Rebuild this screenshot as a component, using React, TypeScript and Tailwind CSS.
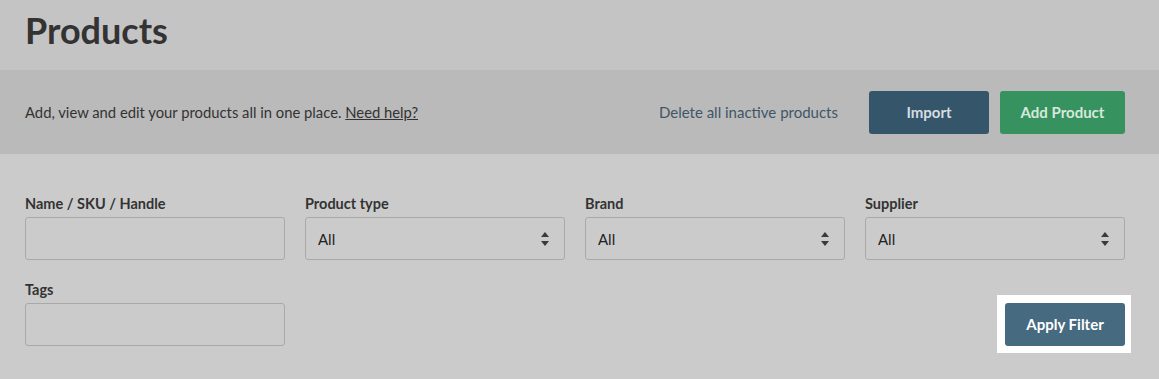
import React from "react";

const font = { fontFamily: "Lato, 'Liberation Sans', sans-serif" };

function Arrows() {
  return (
    <svg width="10" height="18" viewBox="0 0 10 18" className="shrink-0">
      <path d="M1 7 L5 2 L9 7 Z" fill="#3a3a3a" />
      <path d="M1 11 L5 16 L9 11 Z" fill="#3a3a3a" />
    </svg>
  );
}

function Field({ label, select }: { label: string; select?: boolean }) {
  return (
    <div className="flex flex-col">
      <label className="text-[14.5px] leading-[20px] font-bold text-[#333] mb-[3px]">{label}</label>
      <div className="h-[43px] rounded-[3px] border border-[#a9a9a9] bg-[#cbcbcb] flex items-center justify-between pl-[12px] pr-[14px]">
        {select && (
          <>
            <span className="text-[15px] text-[#222] mt-[1px]">All</span>
            <Arrows />
          </>
        )}
      </div>
    </div>
  );
}

export default function App() {
  return (
    <div className="w-[1159px] h-[379px] bg-[#cbcbcb] overflow-hidden" style={font}>
      {/* Title */}
      <div className="h-[70px] bg-[#c4c4c4] px-[25px] flex items-center">
        <h1 className="text-[36px] font-bold text-[#333] leading-none -mt-[10px]">Products</h1>
      </div>

      {/* Banner */}
      <div className="h-[84px] bg-[#bababa] pl-[25px] pr-[34px] flex items-center justify-between">
        <p className="text-[14.8px] text-[#333]">
          Add, view and edit your products all in one place.{" "}
          <a className="underline text-[#333]">Need help?</a>
        </p>
        <div className="flex items-center">
          <span className="text-[15px] text-[#3f5668] mr-[31px]">Delete all inactive products</span>
          <button className="w-[120px] h-[43px] rounded-[3px] bg-[#35566a] text-[#d6dde2] text-[15px] font-bold mr-[11px]">
            Import
          </button>
          <button className="w-[125px] h-[43px] rounded-[3px] bg-[#36935f] text-[#d8e8dc] text-[15px] font-bold">
            Add Product
          </button>
        </div>
      </div>

      {/* Filters */}
      <div className="pl-[25px] pt-[40px] pr-[34px]">
        <div className="grid grid-cols-4 gap-x-[20px] gap-y-[20px]">
          <Field label="Name / SKU / Handle" />
          <Field label="Product type" select />
          <Field label="Brand" select />
          <Field label="Supplier" select />
          <Field label="Tags" />
          <div />
          <div />
          <div className="flex items-end justify-end">
            <div className="bg-white pl-[8px] pt-[8px] pr-[6px] pb-[7px] -mr-[6px] -mb-[7px]">
              <button className="w-[120px] h-[43px] rounded-[3px] bg-[#466a80] text-white text-[15px] font-bold block">
                Apply Filter
              </button>
            </div>
          </div>
        </div>
      </div>
    </div>
  );
}
